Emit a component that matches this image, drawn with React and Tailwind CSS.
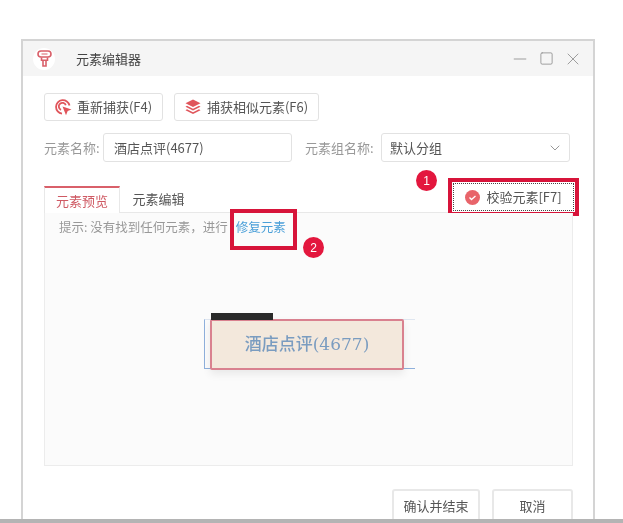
import React from "react";
import { ChevronDown, Minus, Square, X } from "lucide-react";

const FONT = "font-['Noto_Sans_CJK_SC','Noto_Sans',sans-serif]";

function Logo() {
    return (
        <div className="w-[22px] h-[22px] rounded-full bg-white flex items-center justify-center">
            <svg width="15" height="17" viewBox="0 0 15 17" fill="none" stroke="#d9606a" strokeWidth="1.600">
                <rect x="1" y="1" width="13" height="6" rx="3" />
                <path d="M4.500 7.500v2.700h6V7.500M6 10.200V16h3v-5.800" />
                <path d="M4.500 4h6" strokeWidth="1" />
            </svg>
        </div>
    );
}

function RecaptureIcon() {
    return (
        <svg width="17" height="17" viewBox="0 0 17 17" fill="none" stroke="#e0555b" strokeWidth="1.800">
            <path d="M14.500 6.500A6.800 6.800 0 1 0 7 14.700" />
            <path d="M10.800 6.300A3.600 3.600 0 1 0 6 10.800" />
            <path d="M7.500 7.500l9 3-3.800 1.500-1.700 4.300z" fill="#e0555b" stroke="none" />
        </svg>
    );
}

function StackIcon() {
    return (
        <svg width="16" height="16" viewBox="0 0 16 16" fill="#e0555b">
            <path d="M8 .5l7.500 3.700L8 8 .5 4.200z" />
            <path d="M2 6.800l6 3 6-3 1.500.9L8 11.500.5 7.700z" />
            <path d="M2 10.300l6 3 6-3 1.500.9L8 15 .5 11.200z" />
        </svg>
    );
}

function Bubble({ className, children }) {
    return (
        <div className={`absolute w-[21px] h-[21px] rounded-full bg-[#e3173e] text-white text-[12px] flex items-center justify-center font-['Liberation_Sans',sans-serif] ${className}`}>
            {children}
        </div>
    );
}

export default function App() {
    return (
        <div className={`relative w-[623px] h-[523px] overflow-hidden bg-white flex flex-col blur-[0.35px] ${FONT}`}>
            <div className="h-[39px] shrink-0" />
            <div className="ml-[21px] w-[574px] h-[480px] shrink-0 border-x-2 border-t-2 border-[#d4d4d4] bg-white flex flex-col">
                {/* Title bar */}
                <div className="h-[35px] shrink-0 bg-[#f5f5f5] flex items-center pl-[10px] pr-[10px]">
                    <Logo />
                    <span className="ml-[21px] text-[13px] text-[#444]">元素编辑器</span>
                    <div className="ml-auto flex items-center gap-[9px] text-[#8c8c8c]">
                        <Minus size={20} strokeWidth={1} />
                        <Square size={15} strokeWidth={1.300} />
                        <X size={20} strokeWidth={1} />
                    </div>
                </div>

                <div className="flex-1 pl-[21px] pr-[21px] flex flex-col">
                    {/* Capture buttons */}
                    <div className="mt-[17px] flex gap-[11px]">
                        <button className="w-[119px] h-[28px] border border-[#e2e2e2] rounded-[3px] flex items-center justify-center gap-[5px] text-[13px] text-[#555]">
                            <RecaptureIcon />
                            重新捕获(F4)
                        </button>
                        <button className="w-[145px] h-[28px] border border-[#e2e2e2] rounded-[3px] flex items-center justify-center gap-[6px] text-[13px] text-[#555]">
                            <StackIcon />
                            捕获相似元素(F6)
                        </button>
                    </div>

                    {/* Name fields */}
                    <div className="mt-[12px] flex items-center text-[13px]">
                        <span className="w-[59px] text-[#999]">元素名称:</span>
                        <div className="w-[189px] h-[29px] border border-[#e2e2e2] rounded-[3px] flex items-center pl-[10px] text-[#555]">酒店点评(4677)</div>
                        <span className="ml-[13px] w-[76px] text-[#999]">元素组名称:</span>
                        <div className="w-[189px] h-[29px] border border-[#e2e2e2] rounded-[3px] flex items-center justify-between pl-[8px] pr-[6px] text-[#555]">
                            默认分组
                            <ChevronDown size={16} strokeWidth={1.300} className="text-[#888]" />
                        </div>
                    </div>

                    {/* Tabs */}
                    <div className="relative mt-[24px] flex h-[27px] text-[13px] border-b border-[#e8e8e8] w-[529px]">
                        <div className="w-[76px] border-t-2 border-x border-t-[#d9606a] border-x-[#e8e8e8] bg-white -mb-px text-[#cf5a64] flex items-center justify-center">元素预览</div>
                        <div className="w-[77px] flex items-center justify-center text-[#555]">元素编辑</div>
                        <Bubble className="left-[372px] -top-[16px]">1</Bubble>
                        <div className="absolute left-[404px] -top-[8px] w-[131px] h-[38px] border-[4px] border-[#d7143a] bg-white p-[1px]">
                            <div className="h-full border border-dotted border-[#444] flex items-center justify-center gap-[6px] text-[#555]">
                                <span className="w-[15px] h-[15px] rounded-full bg-[#e8646a] flex items-center justify-center">
                                    <svg width="9" height="9" viewBox="0 0 9 9" fill="none" stroke="#fff" strokeWidth="1.300">
                                        <path d="M1.500 4.500l2 2 4-3.500" />
                                    </svg>
                                </span>
                                校验元素[F7]
                            </div>
                        </div>
                    </div>

                    {/* Preview panel */}
                    <div className="relative w-[529px] h-[253px] bg-[#fbfbfb] border-x border-b border-[#ececec] flex flex-col items-center">
                        <div className="self-start mt-[5px] ml-[14px] text-[12.500px] text-[#999] flex">
                            提示: 没有找到任何元素，进行
                            <span className="text-[#4a9fd8] ml-[8px]">修复元素</span>
                        </div>
                        <div className="absolute left-[185px] top-[-4px] w-[67px] h-[41px] border-[4px] border-[#d7143a]" />
                        <Bubble className="left-[258px] top-[24px]">2</Bubble>

                        <div className="relative mt-[82px] ml-[2px] w-[211px] h-[50px] border-y border-l border-t-[#dfe6f0] border-b-[#8fb0dc] border-l-[#8fb0dc] pl-[5px]">
                            <div className="absolute left-[6px] -top-[7px] w-[62px] h-[7px] bg-[#2a2a2a]" />
                            <div className="w-[194px] h-[51px] -mt-px bg-[#f3e8dc] border-2 border-[#d9818f] rounded-[2px] flex items-center justify-center text-[17px] font-medium text-[#7a9cc0] shadow-[0_4px_8px_rgba(0,0,0,0.08)] font-['DejaVu_Serif','Noto_Sans_CJK_SC',serif]">
                                酒店点评(4677)
                            </div>
                        </div>
                    </div>

                    {/* Footer */}
                    <div className="mt-[23px] flex justify-end gap-[12px] w-[529px] text-[13px] text-[#555]">
                        <button className="w-[88px] h-[34px] border-2 border-[#e8e8e8] rounded-[3px]">确认并结束</button>
                        <button className="w-[81px] h-[34px] border-2 border-[#e8e8e8] rounded-[3px]">取消</button>
                    </div>
                </div>
            </div>
            <div className="h-[4px] shrink-0 bg-[#b4b4b4] relative z-10" />
        </div>
    );
}
